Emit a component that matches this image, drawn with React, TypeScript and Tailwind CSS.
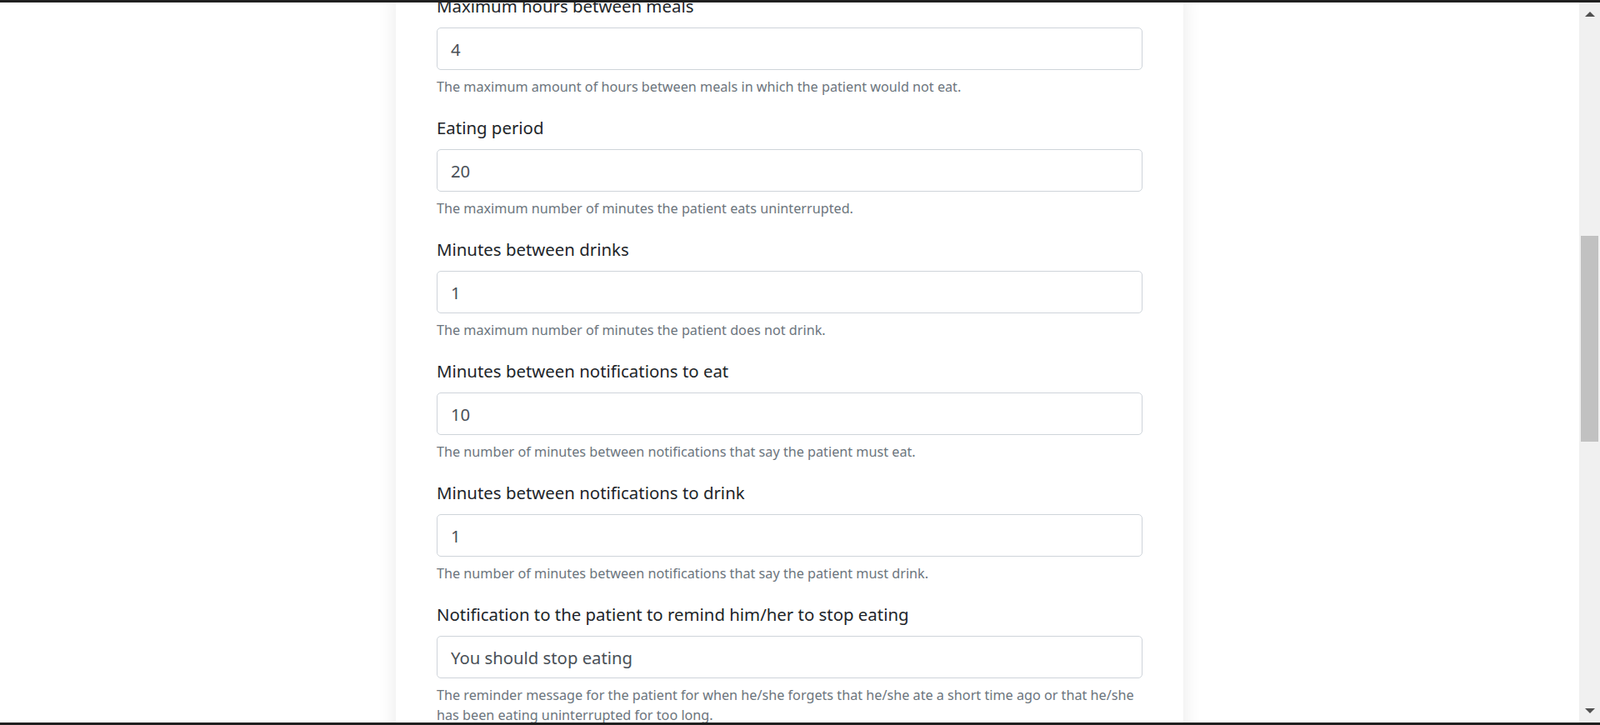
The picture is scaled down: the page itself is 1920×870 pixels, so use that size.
const fields = [
  {
    label: "Maximum hours between meals",
    value: "4",
    help: "The maximum amount of hours between meals in which the patient would not eat.",
  },
  {
    label: "Eating period",
    value: "20",
    help: "The maximum number of minutes the patient eats uninterrupted.",
  },
  {
    label: "Minutes between drinks",
    value: "1",
    help: "The maximum number of minutes the patient does not drink.",
  },
  {
    label: "Minutes between notifications to eat",
    value: "10",
    help: "The number of minutes between notifications that say the patient must eat.",
  },
  {
    label: "Minutes between notifications to drink",
    value: "1",
    help: "The number of minutes between notifications that say the patient must drink.",
  },
  {
    label: "Notification to the patient to remind him/her to stop eating",
    value: "You should stop eating",
    help: "The reminder message for the patient for when he/she forgets that he/she ate a short time ago or that he/she has been eating uninterrupted for too long.",
  },
];

const FormGroup = ({ label, value, help }: { label: string; value: string; help: string }) => {
  return (
    <div className="mb-[22px]">
      <label className="block text-[20.4px] leading-[30px] text-[#212529] mb-[11px]">{label}</label>
      <input
        type="text"
        defaultValue={value}
        className="block w-full h-[51px] px-[16px] text-[20.3px] text-[#495057] bg-white border border-[#ced4da] rounded-[5px] outline-none"
      />
      <small className="block mt-[8px] text-[16.2px] leading-[24px] text-[#6c757d]">{help}</small>
    </div>
  );
};

const Scrollbar = () => {
  return (
    <div className="w-[25px] shrink-0 bg-[#f0f0f0] flex flex-col items-center relative">
      <div className="h-[28px] flex items-center justify-center w-full">
        <div className="w-0 h-0 border-l-[6px] border-r-[6px] border-b-[6px] border-l-transparent border-r-transparent border-b-[#505050]" />
      </div>
      <div className="absolute left-[2px] right-[2px] top-[280px] h-[247px] bg-[#c1c1c1]" />
      <div className="mt-auto h-[28px] flex items-center justify-center w-full">
        <div className="w-0 h-0 border-l-[6px] border-r-[6px] border-t-[6px] border-l-transparent border-r-transparent border-t-[#505050]" />
      </div>
    </div>
  );
};

export default function App() {
  return (
    <div
      className="h-[870px] w-full flex flex-col bg-white overflow-hidden"
      style={{ fontFamily: '"Noto Sans", "Open Sans", sans-serif' }}
    >
      <div className="h-[3px] bg-[#202020] shrink-0" />
      <div className="flex-1 flex min-h-0">
        <div className="flex-1 overflow-hidden flex justify-center">
          <div className="w-[945px] bg-white shadow-[0_0_22px_rgba(0,0,0,0.09)] px-[49px] -mt-[11px] h-fit">
            {fields.map((f) => (
              <FormGroup key={f.label} {...f} />
            ))}
          </div>
        </div>
        <Scrollbar />
      </div>
      <div className="h-[3px] bg-[#202020] shrink-0" />
    </div>
  );
}
